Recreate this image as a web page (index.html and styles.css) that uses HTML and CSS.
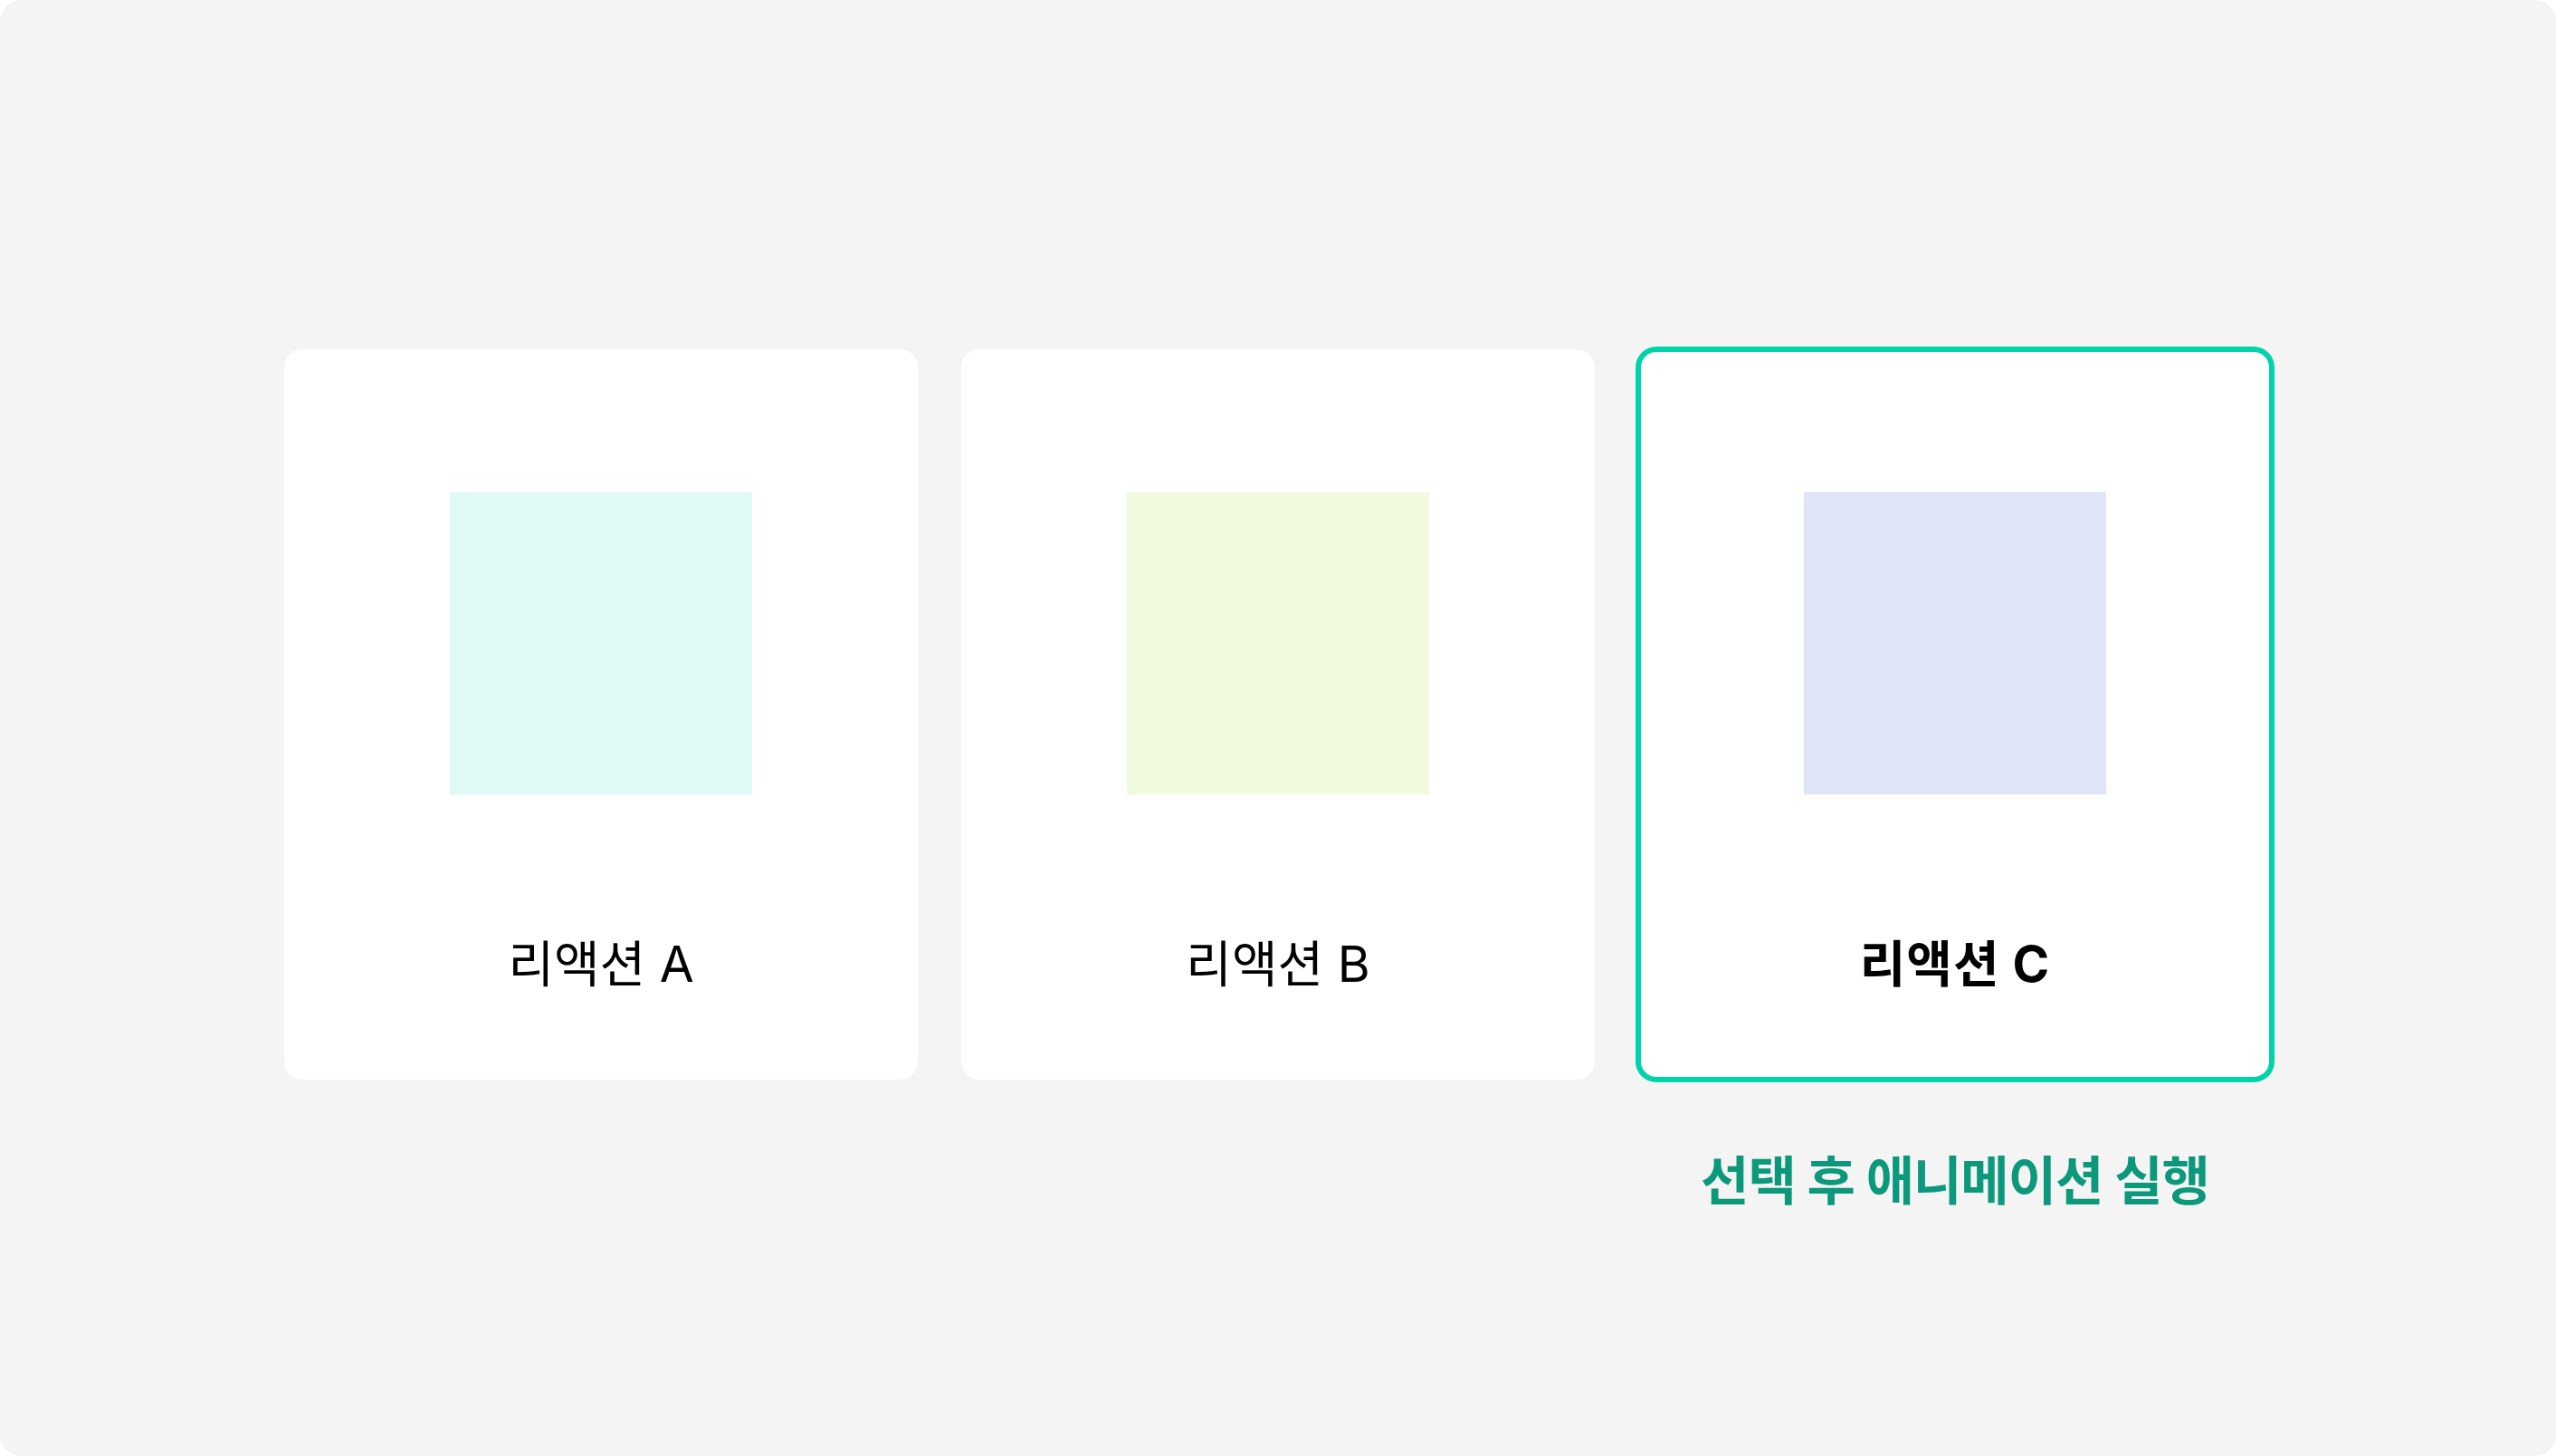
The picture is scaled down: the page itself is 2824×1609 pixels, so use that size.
FILE: index.html
```html
<!DOCTYPE html>
<html lang="ko">
  <head>
    <meta charset="UTF-8" />
    <title>리액션 선택</title>
    <meta name="viewport" content="width=device-width, initial-scale=1.0" />
    <link rel="stylesheet" href="styles.css">
  </head>
  <body>
    <div class="frame">
      <div class="reactions">
        <div class="option">
          <div class="card">
            <div class="swatch mint"></div>
            <div class="label">리액션 A</div>
          </div>
        </div>
        <div class="option">
          <div class="card">
            <div class="swatch lime"></div>
            <div class="label">리액션 B</div>
          </div>
        </div>
        <div class="option">
          <div class="card selected">
            <div class="swatch lavender"></div>
            <div class="label">리액션 C</div>
          </div>
          <div class="caption">선택 후 애니메이션 실행</div>
        </div>
      </div>
    </div>
  </body>
</html>
```

FILE: styles.css
```css
html,
body {
  margin: 0;
  padding: 0;
  background: #fff;
}

body {
  font-family: Inter, "Noto Sans CJK KR", sans-serif;
  color: #000;
}

.frame {
  width: 2824px;
  height: 1609px;
  background-color: #f4f4f4;
  border-radius: 24px;
  box-sizing: border-box;
  padding-top: 386px;
  display: flex;
  justify-content: center;
}

.reactions {
  display: grid;
  grid-template-columns: repeat(3, 700px);
  gap: 48px;
  align-items: start;
}

.option {
  display: flex;
  flex-direction: column;
  align-items: center;
}

.card {
  width: 700px;
  height: 807px;
  background-color: #fff;
  border-radius: 20px;
  box-sizing: border-box;
  padding-top: 158px;
  display: flex;
  flex-direction: column;
  align-items: center;
}

.card.selected {
  outline: 6px solid #00d3a9;
  outline-offset: -3px;
}

.swatch {
  width: 334px;
  height: 334px;
}

.mint {
  background-color: #dff9f4;
}

.lime {
  background-color: #f1f9de;
}

.lavender {
  background-color: #dfe4f8;
}

.label {
  margin-top: 154px;
  font-size: 55px;
  line-height: 66px;
  letter-spacing: 0;
}

.selected .label {
  font-weight: 700;
  letter-spacing: 1px;
}

.caption {
  margin-top: 77px;
  font-size: 58px;
  line-height: 70px;
  font-weight: 700;
  letter-spacing: -1px;
  color: #0b987b;
}
```
